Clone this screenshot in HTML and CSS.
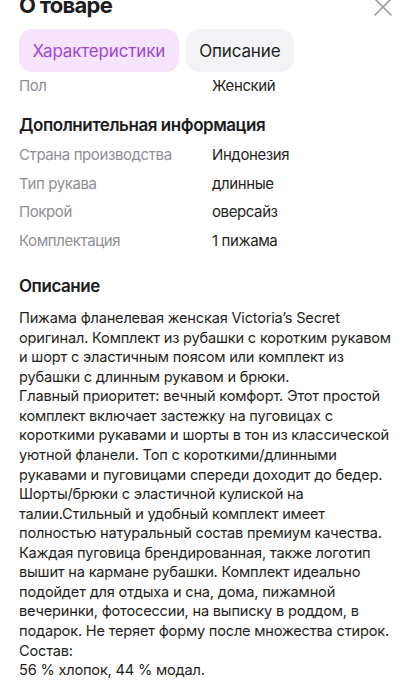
FILE: index.html
```html
<!DOCTYPE html>
<html lang="ru">
<head>
<meta charset="utf-8">
<title>О товаре</title>
<link rel="stylesheet" href="styles.css">
</head>
<body>
<div class="sheet">
  <header class="head">
    <div class="title-row">
      <h1 class="title">О товаре</h1>
      <svg class="close" width="18" height="18" viewBox="0 0 18 18" aria-hidden="true">
        <path d="M1 1 L17 17 M17 1 L1 17" stroke="#9a9a9c" stroke-width="1.6" stroke-linecap="round" fill="none"/>
      </svg>
    </div>
    <div class="tabs">
      <span class="tab tab-active">Характеристики</span>
      <span class="tab">Описание</span>
    </div>
  </header>
  <main class="scroll">
    <div class="content">
      <dl class="props first">
        <dt>Пол</dt><dd>Женский</dd>
      </dl>
      <h2 class="section">Дополнительная информация</h2>
      <dl class="props">
        <dt>Страна производства</dt><dd>Индонезия</dd>
        <dt>Тип рукава</dt><dd>длинные</dd>
        <dt>Покрой</dt><dd>оверсайз</dd>
        <dt>Комплектация</dt><dd>1 пижама</dd>
      </dl>
      <h2 class="section desc-title">Описание</h2>
      <p class="desc">Пижама фланелевая женская Victoria’s Secret оригинал. Комплект из рубашки с коротким рукавом и шорт с эластичным поясом или комплект из рубашки с длинным рукавом и брюки.<br>Главный приоритет: вечный комфорт. Этот простой комплект включает застежку на пуговицах с короткими рукавами и шорты в тон из классической уютной фланели. Топ с короткими/длинными рукавами и пуговицами спереди доходит до бедер. Шорты/брюки с эластичной кулиской на талии.Стильный и удобный комплект имеет полностью натуральный состав премиум качества. Каждая пуговица брендированная, также логотип вышит на кармане рубашки. Комплект идеально подойдет для отдыха и сна, дома, пижамной вечеринки, фотосессии, на выписку в роддом, в подарок. Не теряет форму после множества стирок.<br>Состав:<br>56 % хлопок, 44 % модал.</p>
    </div>
  </main>
</div>
</body>
</html>
```

FILE: styles.css
```css
html, body {
  margin: 0;
  padding: 0;
  background: #ffffff;
}
body {
  font-family: Inter, "Noto Sans", "Liberation Sans", sans-serif;
  color: #1f1f21;
  -webkit-font-smoothing: antialiased;
}
.sheet {
  width: 413px;
  height: 699px;
  overflow: hidden;
  display: flex;
  flex-direction: column;
}
.head {
  background: #fff;
  padding: 0 19px;
  height: 80px;
  flex: none;
  position: relative;
  z-index: 1;
}
.title-row {
  display: flex;
  align-items: center;
  justify-content: space-between;
  margin-top: -10px;
  height: 30px;
}
.title {
  margin: 0;
  font-size: 22px;
  font-weight: 700;
  line-height: 30px;
  letter-spacing: -0.7px;
  color: #1c1c1e;
}
.close {
  margin-right: 2px;
  margin-top: 4px;
}
.tabs {
  display: flex;
  gap: 7px;
  margin-top: 9px;
}
.tab {
  height: 43px;
  display: flex;
  align-items: center;
  padding: 0 13.5px;
  border-radius: 13px;
  background: #f3f3f5;
  font-size: 17px;
  letter-spacing: -0.15px;
  color: #1f1f21;
}
.tab-active {
  background: #f6e4fc;
  color: #9c47d4;
}
.scroll {
  flex: 1;
  overflow: hidden;
}
.content {
  padding: 0 19px;
  margin-top: -8px;
}
.props {
  display: grid;
  grid-template-columns: 193px 1fr;
  margin: 0;
  font-size: 15px;
  line-height: 28.4px;
  letter-spacing: -0.4px;
}
.props dt {
  color: #8e8e95;
}
.props dd {
  margin: 0;
  color: #1f1f21;
}
.section {
  margin: 13px 0 4px;
  font-size: 17px;
  font-weight: 600;
  line-height: 24px;
  letter-spacing: -0.45px;
  color: #1c1c1e;
}
.desc-title {
  margin: 19px 0 0;
}
.desc {
  margin: 11px 0 0;
  font-size: 14.6px;
  line-height: 19.56px;
  letter-spacing: -0.2px;
  color: #1f1f21;
}
```
